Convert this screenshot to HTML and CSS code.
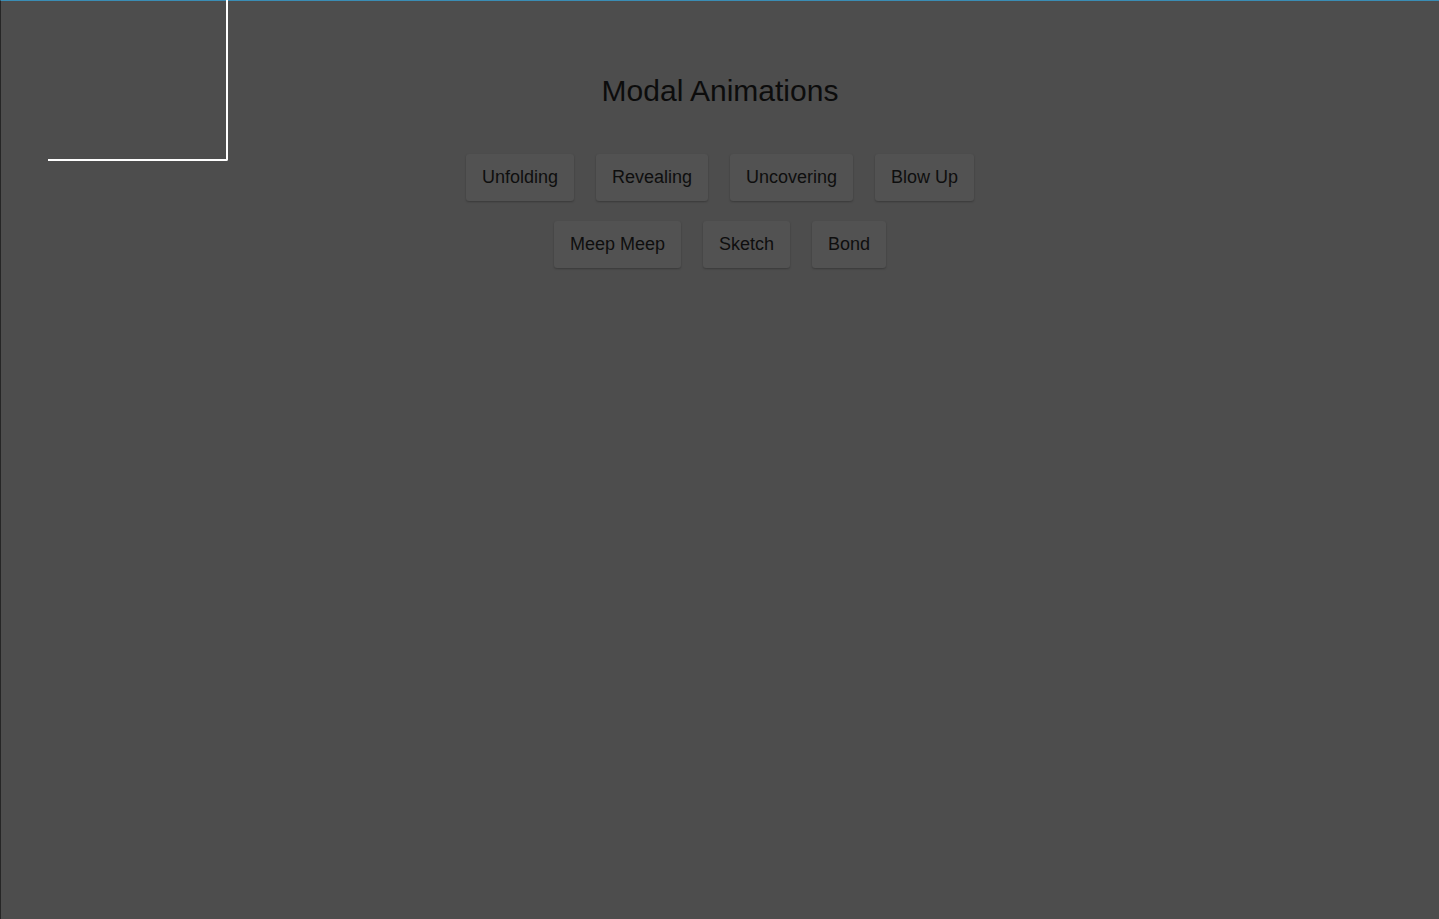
FILE: index.html
```html
<!DOCTYPE html>
<html>
<head>
<meta charset="utf-8">
<link rel="stylesheet" href="styles.css">
</head>
<body>
<div class="page">
  <div class="corner"></div>
  <h1 class="title">Modal Animations</h1>
  <div class="buttons">
    <div class="row">
      <button class="btn">Unfolding</button>
      <button class="btn">Revealing</button>
      <button class="btn">Uncovering</button>
      <button class="btn">Blow Up</button>
    </div>
    <div class="row">
      <button class="btn">Meep Meep</button>
      <button class="btn">Sketch</button>
      <button class="btn">Bond</button>
    </div>
  </div>
</div>
</body>
</html>
```
FILE: styles.css
```css
html, body {
  margin: 0;
  padding: 0;
  height: 100%;
}
body {
  background: #4d4d4d;
  font-family: "Liberation Sans", Arial, sans-serif;
  overflow: hidden;
}
.page {
  position: relative;
  height: 918px;
  border-top: 1px solid #3a8db5;
  border-left: 1px solid #262626;
  background: #4d4d4d;
}
.corner {
  position: absolute;
  left: 47px;
  top: -1px;
  width: 178px;
  height: 159px;
  border-right: 2px solid #ffffff;
  border-bottom: 2px solid #ffffff;
  border-bottom-right-radius: 2px;
}
.title {
  margin: 0;
  padding-top: 73px;
  text-align: center;
  font-size: 30px;
  line-height: 34px;
  font-weight: normal;
  color: #0c0c0c;
}
.buttons {
  margin-top: 46px;
  display: flex;
  flex-direction: column;
  align-items: center;
  gap: 20px;
}
.row {
  display: flex;
  justify-content: center;
  gap: 22px;
}
.btn {
  font-family: "Liberation Sans", Arial, sans-serif;
  font-size: 18px;
  line-height: 21px;
  padding: 13px 16px;
  border: none;
  border-radius: 3px;
  background: #525252;
  color: #0e0e0e;
  box-shadow: 0 1px 2px rgba(0, 0, 0, 0.25);
  cursor: pointer;
}
```
